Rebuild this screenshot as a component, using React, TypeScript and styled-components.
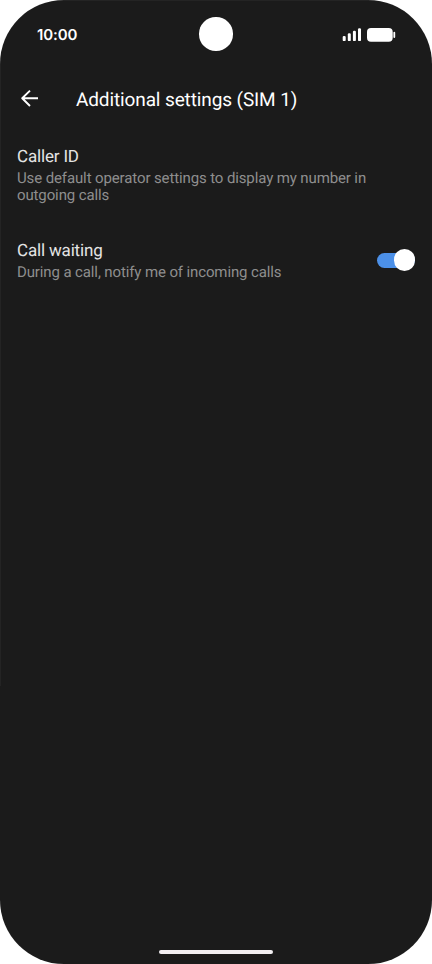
import React from "react";
import styled, { createGlobalStyle } from "styled-components";

const GlobalStyle = createGlobalStyle`
  * { box-sizing: border-box; }
  body { margin: 0; background: #fff; }
`;

const Screen = styled.div`
  width: 432px;
  height: 964px;
  display: flex;
  flex-direction: column;
  overflow: hidden;
  border-radius: 64px;
  background:
    linear-gradient(#242424, #242424) 0 0 / 100% 1px no-repeat,
    linear-gradient(#242424, #242424) 0 0 / 1px 686px no-repeat,
    #1b1b1b;
  font-family: Roboto, sans-serif;
  text-rendering: geometricPrecision;
  color: #fff;
`;

const StatusBar = styled.header`
  height: 68px;
  flex: none;
  padding: 0 36px 0 37px;
  display: grid;
  grid-template-columns: 162.3px 33.5px 1fr;
  align-items: center;
`;

const Clock = styled.time`
  font: 600 15px/20px Inter, sans-serif;
  letter-spacing: -0.1px;
  padding-top: 1px;
`;

const Camera = styled.div`
  width: 33.5px;
  height: 33.5px;
  margin-top: 0.4px;
  border-radius: 50%;
  background: #fff;
`;

const StatusIcons = styled.svg`
  justify-self: end;
  display: block;
`;

const TitleBar = styled.div`
  height: 62px;
  flex: none;
  display: flex;
  align-items: center;
  padding-left: 20px;
  gap: 36px;
`;

const BackButton = styled.button`
  width: 20px;
  height: 20px;
  padding: 0;
  border: 0;
  background: none;
  color: #fff;
  display: flex;
`;

const Title = styled.h1`
  margin: 1px 0 0;
  font-size: 19px;
  line-height: 24px;
  letter-spacing: -0.12px;
  font-weight: 400;
`;

const Settings = styled.main`
  flex: 1;
  display: flex;
  flex-direction: column;
  gap: 37px;
  padding: 17px 17px 0;
`;

const SettingRow = styled.section`
  display: flex;
  align-items: center;
  justify-content: space-between;
`;

const SettingName = styled.h2`
  margin: 0;
  font-size: 17px;
  line-height: 20px;
  letter-spacing: -0.17px;
  font-weight: 400;
  color: #e4e4e4;
`;

const SettingHint = styled.p`
  margin: 3px 0 0;
  max-width: 370px;
  font-size: 15px;
  line-height: 17px;
  letter-spacing: -0.12px;
  color: #8e8e8e;
`;

const Switch = styled.button`
  width: 38px;
  height: 15px;
  margin-bottom: 2px;
  padding: 0;
  border: 0;
  border-radius: 8px;
  background: #4c90e8;
  display: flex;
  align-items: center;
  justify-content: flex-end;
`;

const Knob = styled.span`
  width: 21.5px;
  height: 21.5px;
  flex: none;
  border-radius: 50%;
  background: #fff;
`;

const HomeIndicator = styled.div`
  align-self: center;
  width: 114px;
  height: 4px;
  margin-bottom: 10.5px;
  border-radius: 2px;
  background: #f3eff2;
`;

export default function App() {
  return (
    <>
      <GlobalStyle />
      <Screen>
        <StatusBar>
          <Clock>10:00</Clock>
          <Camera />
          <StatusIcons width="54" height="16" viewBox="0 0 54 16" fill="#fff">
            <rect x=".7" y="9.9" width="3" height="5.2" rx="1.2" />
            <rect x="5.8" y="7.3" width="3" height="7.8" rx="1.2" />
            <rect x="10.9" y="4.7" width="3" height="10.4" rx="1.2" />
            <rect x="16" y="2.2" width="3" height="12.9" rx="1.2" />
            <rect x="25" y="2" width="25.7" height="13.8" rx="4" />
            <rect x="51.4" y="5.8" width="1.8" height="6.2" rx=".9" />
          </StatusIcons>
        </StatusBar>
        <TitleBar>
          <BackButton aria-label="Back">
            <svg width="20" height="20" viewBox="0 0 20 20" fill="none" stroke="currentColor" strokeWidth="1.9" strokeLinejoin="round">
              <path d="M18 9.3H2.5M10 1.6 2.2 9.3l7.8 7.7" />
            </svg>
          </BackButton>
          <Title>Additional settings (SIM 1)</Title>
        </TitleBar>
        <Settings>
          <SettingRow>
            <div>
              <SettingName>Caller ID</SettingName>
              <SettingHint>Use default operator settings to display my number in outgoing calls</SettingHint>
            </div>
          </SettingRow>
          <SettingRow>
            <div>
              <SettingName>Call waiting</SettingName>
              <SettingHint>During a call, notify me of incoming calls</SettingHint>
            </div>
            <Switch role="switch" aria-checked="true" aria-label="Call waiting"><Knob /></Switch>
          </SettingRow>
        </Settings>
        <HomeIndicator />
      </Screen>
    </>
  );
}
